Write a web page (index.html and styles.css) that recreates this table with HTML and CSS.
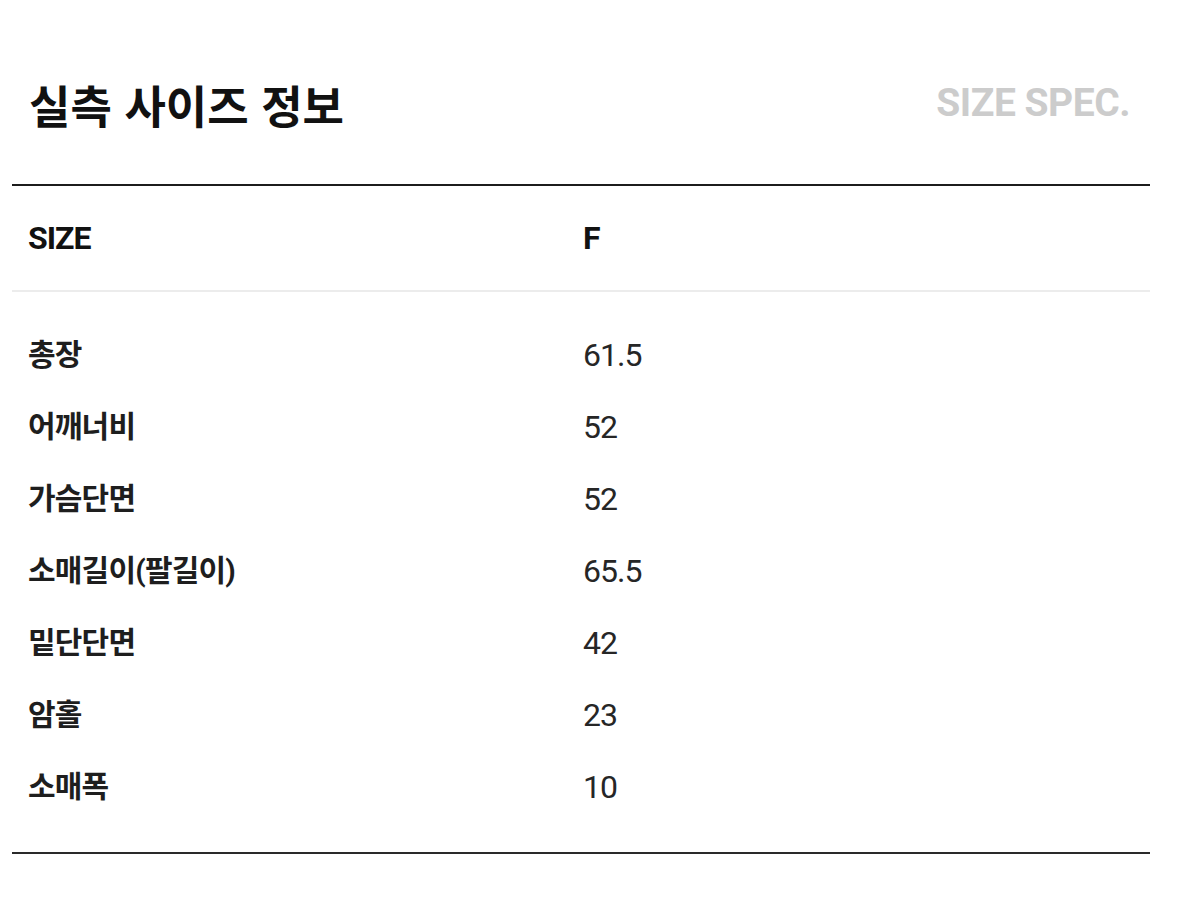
FILE: index.html
```html
<!DOCTYPE html>
<html lang="ko">
<head>
<meta charset="utf-8">
<title>실측 사이즈 정보</title>
<link rel="stylesheet" href="styles.css">
</head>
<body>
<section class="spec">
  <header class="spec-head">
    <h1 class="spec-title">실측 사이즈 정보</h1>
    <span class="spec-sub">SIZE SPEC.</span>
  </header>
  <div class="spec-table">
    <div class="row row-head">
      <div class="cell label">SIZE</div>
      <div class="cell value">F</div>
    </div>
    <div class="body">
      <div class="row"><div class="cell label">총장</div><div class="cell value">61.5</div></div>
      <div class="row"><div class="cell label">어깨너비</div><div class="cell value">52</div></div>
      <div class="row"><div class="cell label">가슴단면</div><div class="cell value">52</div></div>
      <div class="row"><div class="cell label">소매길이(팔길이)</div><div class="cell value">65.5</div></div>
      <div class="row"><div class="cell label">밑단단면</div><div class="cell value">42</div></div>
      <div class="row"><div class="cell label">암홀</div><div class="cell value">23</div></div>
      <div class="row"><div class="cell label">소매폭</div><div class="cell value">10</div></div>
    </div>
  </div>
</section>
</body>
</html>
```

FILE: styles.css
```css
* { box-sizing: border-box; }
html, body {
  margin: 0;
  padding: 0;
  background: #ffffff;
}
body {
  font-family: Roboto, "Noto Sans CJK KR", sans-serif;
  color: #1a1a1a;
}
.spec {
  width: 1138px;
  margin-left: 12px;
}
.spec-head {
  display: flex;
  align-items: center;
  justify-content: space-between;
  padding: 79px 20px 53px 17px;
}
.spec-title {
  margin: 0;
  font-family: "Noto Sans CJK KR", sans-serif;
  font-size: 45px;
  line-height: 52px;
  font-weight: 700;
  color: #111111;
  letter-spacing: 0;
}
.spec-sub {
  font-family: Roboto, sans-serif;
  font-size: 39px;
  line-height: 46px;
  font-weight: 700;
  color: #cccccc;
  letter-spacing: -0.5px;
  margin-top: -5px;
}
.spec-table {
  border-top: 2px solid #1c1c1c;
  border-bottom: 2px solid #2a2a2a;
}
.row {
  display: grid;
  grid-template-columns: 555px 1fr;
  align-items: center;
  height: 72px;
  padding-left: 16px;
}
.row-head {
  height: 106px;
  border-bottom: 2px solid #ececec;
}
.body {
  padding: 27px 0 29px;
}
.cell {
  line-height: 40px;
}
.label {
  font-size: 30px;
  font-weight: 700;
  color: #1e1e1e;
  letter-spacing: -0.8px;
}
.value {
  font-size: 32px;
  font-weight: 400;
  color: #262626;
  letter-spacing: -1px;
}
.row-head .cell {
  font-family: Roboto, sans-serif;
  font-size: 32px;
  font-weight: 700;
  color: #111111;
  letter-spacing: -1px;
}
```
